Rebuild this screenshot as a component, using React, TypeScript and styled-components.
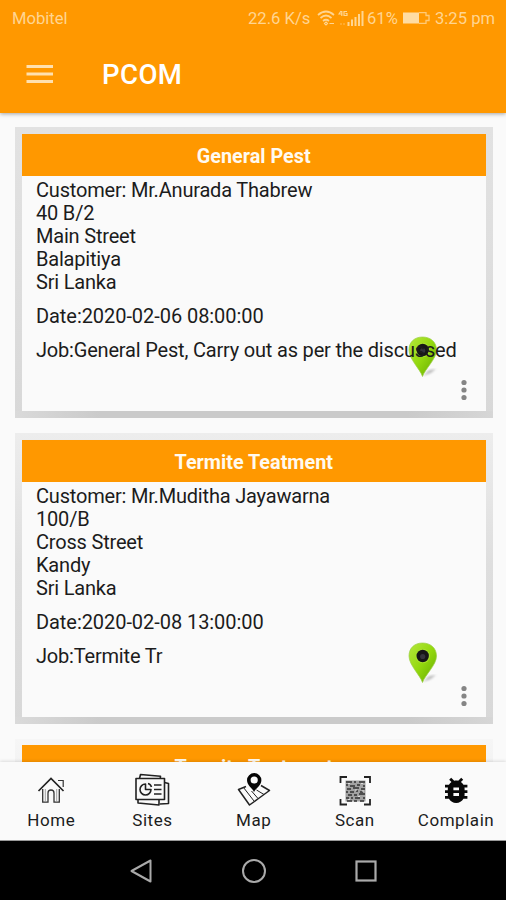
import React from "react";
import styled, { createGlobalStyle } from "styled-components";

const GlobalStyle = createGlobalStyle`
  * { box-sizing: border-box; }
  body { margin: 0; background: #fafafa; overflow: hidden; }
`;

const Screen = styled.div`
  width: 506px;
  height: 900px;
  display: flex;
  flex-direction: column;
  overflow: hidden;
  background: #fafafa;
  font-family: Roboto, "Liberation Sans", sans-serif;
  color: #1c1c1c;
`;

const Header = styled.header`
  flex: 0 0 113px;
  background: #ff9800;
  box-shadow: 0 1px 4px rgba(0, 0, 0, 0.35);
  z-index: 1;
`;

const StatusBar = styled.div`
  height: 36px;
  padding: 0 11px 0 12px;
  display: flex;
  align-items: center;
  justify-content: space-between;
  color: #ffd592;
  font-size: 16.6px;
  line-height: 37px;
`;

const StatusGroup = styled.div`
  display: flex;
  align-items: center;
  white-space: pre;
`;

const StatusText = styled.span<{ $w: number }>`
  width: ${(p) => p.$w}px;
`;

const StatusIcon = styled.svg<{ $right: number }>`
  display: block;
  margin-right: ${(p) => p.$right}px;
`;

const TitleBar = styled.div`
  height: 77px;
  padding-left: 26px;
  display: flex;
  align-items: center;
`;

const MenuIcon = styled.svg`
  margin: -2px 48px 0 0;
`;

const Title = styled.h1`
  margin: 0;
  font-size: 27.6px;
  font-weight: 500;
  letter-spacing: 0.4px;
  line-height: 32px;
  color: #fff;
`;

const List = styled.main`
  flex: 1 1 0;
  min-height: 0;
  overflow: hidden;
  padding: 14.3px 13.5px 0 15px;
`;

const Card = styled.article<{ $top: string; $side: string }>`
  height: 290.7px;
  margin-bottom: 15px;
  padding: 6.6px;
  background:
    linear-gradient(90deg, #dadada, #cacaca 18%, #cacaca 82%, #d6d6d6) bottom / 100% 7px no-repeat,
    linear-gradient(${(p) => p.$top}, ${(p) => p.$side} 45%, #d8d8d8);
`;

const CardBody = styled.div`
  height: 100%;
  background: #fafafa;
  position: relative;
`;

const CardTitle = styled.h2`
  margin: 0;
  height: 42px;
  background: #ff9800;
  color: #fffaf0;
  text-align: center;
  font-size: 19.8px;
  font-weight: 700;
  line-height: 45px;
`;

const Details = styled.div`
  padding: 3px 0 0 14.4px;
  position: relative;
  z-index: 1;
  font-size: 20px;
  line-height: 23px;
  letter-spacing: -0.19px;
  white-space: nowrap;
`;

const Line = styled.p`
  margin: 0;
`;

const DateLine = styled(Line)`
  margin-top: 11px;
  letter-spacing: -0.06px;
`;

const JobLine = styled(Line)`
  margin-top: 11px;
`;

const Pin = styled.svg`
  position: absolute;
  left: 384px;
  top: 201px;
`;

const Dots = styled.svg`
  position: absolute;
  right: 17.5px;
  bottom: 10px;
`;

const TabBar = styled.nav`
  flex: 0 0 79px;
  display: grid;
  grid-template-columns: repeat(5, 101.2px);
  padding-left: 0.7px;
  background: #fafafa;
  border-bottom: 1px solid #999;
  box-shadow: 0 -1px 3px rgba(0, 0, 0, 0.12);
  z-index: 1;
`;

const Tab = styled.div`
  display: flex;
  flex-direction: column;
  align-items: center;
  padding-top: 8px;
  font-size: 17px;
  line-height: 21px;
  letter-spacing: 0.55px;
  svg { display: block; }
`;

const SystemBar = styled.footer`
  flex: 0 0 59px;
  padding-left: 1.4px;
  background: #000;
  display: flex;
  align-items: center;
  justify-content: center;
  gap: 82.4px;
`;

const MapPin = ({ id }: { id: string }) => (
  <Pin width="44" height="44" viewBox="0 0 44 44">
    <defs>
      <linearGradient id={id} x1="0" y1="0" x2="1" y2="1">
        <stop offset="0" stopColor="#b5e83c" />
        <stop offset="0.5" stopColor="#93d80e" />
        <stop offset="1" stopColor="#62a800" />
      </linearGradient>
      <filter id={`${id}-soft`}><feGaussianBlur stdDeviation="1" /></filter>
    </defs>
    <path d="M17 41 L23 35 L30 34 L25 38Z" fill="#999" opacity="0.6" filter={`url(#${id}-soft)`} />
    <path d="M16.5 41.5 C14 34 3 24 3 15 C3 7 8.500 2 16.500 2 C24.500 2 30.500 7 30.500 15 C30.500 24 19 34 16.500 41.500Z" fill={`url(#${id})`} stroke="#9bcf45" strokeWidth="0.7" />
    <circle cx="16.700" cy="15" r="7.300" fill="#a9e22b" />
    <circle cx="16.700" cy="15" r="6.200" fill="#171717" />
    <circle cx="16.700" cy="15.500" r="2.600" fill="#34343c" />
  </Pin>
);

const HomeIcon = () => (
  <svg width="40" height="40" viewBox="0 0 40 40" fill="none" stroke="#333" strokeWidth="1.5">
    <path d="M7.500 21 L20 8.500 L32.500 21" stroke="#222" strokeWidth="1.700" />
    <path d="M11.700 19 V32.200 H17 V23 Q17 20 20 20 Q23 20 23 23 V32.200 H28.300 V19" strokeWidth="1.300" />
    <path d="M14.300 19 V31 M25.700 19 V31" stroke="#999" strokeWidth="0.900" />
    <path d="M27 10.500 H32.200 V17" strokeWidth="1.200" />
  </svg>
);

const SitesIcon = () => (
  <svg width="40" height="40" viewBox="0 0 40 40" fill="none" stroke="#222" strokeWidth="1.6" strokeLinejoin="round">
    <path d="M7.500 8.500 L8.500 4.500 L28.500 6.200 L28.200 9" />
    <path d="M4 8.500 H32.500 V29.500 H4Z" fill="#fafafa" />
    <path d="M6 29.500 V33 L27 35 V30 M32.500 12.500 L36.500 13.500 V33.500 L28 34" />
    <path d="M13.500 14 A5.500 5.500 0 1 0 19 19.500 H13.500Z" />
    <path d="M16 13.500 Q18.500 14 19.500 17" />
    <path d="M22 15 H29.500 M22 19.500 H29.500 M22 24 H29.500" strokeWidth="1.400" />
  </svg>
);

const MapIcon = () => (
  <svg width="40" height="40" viewBox="0 0 40 40" fill="none" stroke="#222" strokeWidth="1.5" strokeLinejoin="round">
    <path d="M12 16.500 L4.500 19.500 L15.500 35 L24.500 28.500 L35.500 20.500 L27 15.500" />
    <path d="M9.500 17.500 L20 31 M17.500 21 L24 28.500 M22.500 20 L30 24.500" strokeWidth="1" />
    <path d="M20 22 C18.500 18.300 13 15.500 13 10.300 A7.200 7.200 0 0 1 27.400 10.300 C27.400 15.500 21.800 18.300 20 22Z" fill="#050505" stroke="none" />
    <circle cx="20.200" cy="10" r="3.600" fill="#fafafa" stroke="none" />
  </svg>
);

const ScanIcon = () => (
  <svg width="40" height="40" viewBox="0 0 40 40" fill="none" stroke="#222" strokeWidth="2">
    <path d="M5.500 13 V7 H12 M29 7 H35 V13 M5.500 29 V34.500 H12 M29 34.500 H35 V29" strokeWidth="1.800" />
    <rect x="10.500" y="10.500" width="20" height="21" fill="#a2a2a2" stroke="none" />
    <path d="M11 12 H17 M19 12 H21 M24 12 H30 M11 15 H13 M15 16 H20 M22 15 H25 M28 16 H30 M12 19 H16 M18 18 H24 M26 19 H30 M11 22 H13 M15 22 H19 M21 21 H23 M25 22 H28 M13 25 H17 M19 25 H22 M24 24 H30 M11 28 H14 M16 28 H18 M20 28 H25 M28 28 H30 M12 31 H17 M19 31 H22 M25 31 H29" stroke="#333" strokeWidth="1.600" />
    <path d="M13 13.500 H15 M26 13.500 H28 M20 20 H22 M13 29.500 H15 M23 26.500 H25 M27 21 H29" stroke="#ddd" strokeWidth="1.200" />
  </svg>
);

const BugIcon = () => (
  <svg width="40" height="40" viewBox="0 0 40 40">
    <path transform="translate(3.400 3.500) scale(1.400)" fill="#080808" d="M20 8h-2.810c-.45-.78-1.070-1.450-1.820-1.960L17 4.410 15.590 3l-2.170 2.170C12.960 5.060 12.490 5 12 5s-.96.060-1.410.17L8.410 3 7 4.410l1.620 1.630C7.880 6.550 7.260 7.220 6.810 8H4v2h2.090c-.05.33-.09.66-.09 1v1H4v2h2v1c0 .34.04.67.09 1H4v2h2.810c1.040 1.790 2.970 3 5.190 3s4.150-1.210 5.190-3H20v-2h-2.090c.05-.33.09-.66.09-1v-1h2v-2h-2v-1c0-.34-.04-.67-.09-1H20V8zm-6 8h-4v-2h4v2zm0-4h-4v-2h4v2z" />
  </svg>
);

const jobs = [
  {
    title: "General Pest",
    lines: ["Customer: Mr.Anurada Thabrew", "40 B/2", "Main Street", "Balapitiya", "Sri Lanka"],
    date: "Date:2020-02-06 08:00:00",
    job: "Job:General Pest, Carry out as per the discussed",
    top: "#e2e2e2",
    side: "#dedede",
  },
  {
    title: "Termite Teatment",
    lines: ["Customer: Mr.Muditha Jayawarna", "100/B", "Cross Street", "Kandy", "Sri Lanka"],
    date: "Date:2020-02-08 13:00:00",
    job: "Job:Termite Tr",
    top: "#ededed",
    side: "#dedede",
  },
  { title: "Termite Teatment", lines: [], date: "", job: "", top: "#f6f6f6", side: "#e6e6e6" },
];

const tabs = [
  { label: "Home", Icon: HomeIcon },
  { label: "Sites", Icon: SitesIcon },
  { label: "Map", Icon: MapIcon },
  { label: "Scan", Icon: ScanIcon },
  { label: "Complain", Icon: BugIcon },
];

export default function App() {
  return (
    <Screen>
      <GlobalStyle />
      <Header>
        <StatusBar>
          <span>Mobitel</span>
          <StatusGroup>
            <StatusText $w={69}>22.6 K/s</StatusText>
            <StatusIcon $right={3} width="18" height="16" viewBox="0 0 18 16" fill="none" stroke="#ffd592" strokeWidth="1.7">
              <path d="M1 5 Q9 -2 17 5 M3.500 8 Q9 3 14.500 8 M6 11 Q9 8.500 12 11" />
              <path d="M9 12 L10.500 13.500 L9 15 L7.500 13.500Z M12.500 13.500 H17" strokeWidth="1.200" />
            </StatusIcon>
            <StatusIcon $right={3} width="26" height="17" viewBox="0 0 26 17" fill="none" stroke="#ffd592">
              <path d="M3 1 L1 4 H4.500 M3.800 1 V6 M9 1.500 H6 V5.500 H9 V3.500 H7.500" strokeWidth="1.200" />
              <path d="M10.500 16 V12 M14 16 V9.500 M17.500 16 V7 M21 16 V4 M24.500 16 V1" strokeWidth="2" />
              <path d="M3 13 V15 M6 13 V15" opacity="0.600" />
            </StatusIcon>
            <StatusText $w={35}>61%</StatusText>
            <StatusIcon $right={5} width="28" height="14" viewBox="0 0 28 14">
              <rect x="1" y="1.500" width="16" height="11" fill="#ffdca3" />
              <path d="M17 1.700 H24 V4.500 H27 V9.500 H24 V12.300 H17" fill="none" stroke="#ffca78" strokeWidth="1.300" />
            </StatusIcon>
            <span>3:25 pm</span>
          </StatusGroup>
        </StatusBar>
        <TitleBar>
          <MenuIcon width="28" height="20" viewBox="0 0 28 20" stroke="#ffe0ae" strokeWidth="3">
            <path d="M.5 2.500 H27 M.5 10 H27 M.5 17.500 H27" />
          </MenuIcon>
          <Title>PCOM</Title>
        </TitleBar>
      </Header>
      <List>
        {jobs.map((j, i) => (
          <Card key={i} $top={j.top} $side={j.side}>
            <CardBody>
              <CardTitle>{j.title}</CardTitle>
              {j.job && (
                <>
                  <Details>
                    {j.lines.map((l) => (
                      <Line key={l}>{l}</Line>
                    ))}
                    <DateLine>{j.date}</DateLine>
                    <JobLine>{j.job}</JobLine>
                  </Details>
                  <MapPin id={`pin-${i}`} />
                  <Dots width="8" height="22" viewBox="0 0 8 22" fill="#858585">
                    <circle cx="4" cy="3.500" r="2.600" />
                    <circle cx="4" cy="11" r="2.600" />
                    <circle cx="4" cy="18.500" r="2.600" />
                  </Dots>
                </>
              )}
            </CardBody>
          </Card>
        ))}
      </List>
      <TabBar>
        {tabs.map(({ label, Icon }) => (
          <Tab key={label}>
            <Icon />
            <span>{label}</span>
          </Tab>
        ))}
      </TabBar>
      <SystemBar>
        <svg width="30" height="30" viewBox="0 0 30 30" fill="none" stroke="#aaa" strokeWidth="2">
          <path d="M5.500 15 L24.500 4.500 V25.500Z" strokeLinejoin="round" />
        </svg>
        <svg width="30" height="30" viewBox="0 0 30 30" fill="none" stroke="#aaa" strokeWidth="2">
          <circle cx="15" cy="15" r="11" />
        </svg>
        <svg width="30" height="30" viewBox="0 0 30 30" fill="none" stroke="#aaa" strokeWidth="2.200">
          <rect x="5.500" y="5.500" width="19" height="19" />
        </svg>
      </SystemBar>
    </Screen>
  );
}
